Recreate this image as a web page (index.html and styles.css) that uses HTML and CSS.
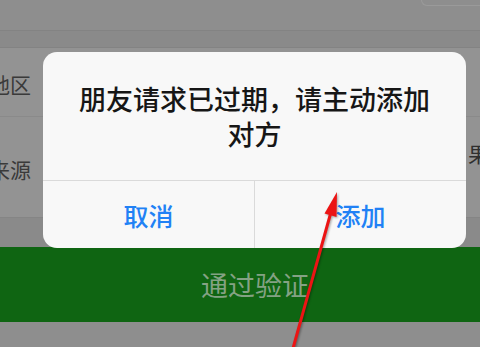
FILE: index.html
```html
<!DOCTYPE html>
<html lang="zh-CN">
<head>
  <meta charset="UTF-8">
  <meta name="viewport" content="width=device-width, initial-scale=1.0">
  <title>朋友验证</title>
  <link rel="stylesheet" href="styles.css">
</head>
<body>
  <div class="page">
    <div class="topbar">
      <div class="topbar-btn"></div>
    </div>
    <div class="band"></div>

    <!-- 资料列表 -->
    <div class="list">
      <div class="row row-region">
        <span class="label">地区</span>
      </div>
      <div class="row row-source">
        <span class="label">来源</span>
        <span class="value">果然</span>
      </div>
    </div>
    <div class="gap"></div>

    <div class="verify-btn">通过验证</div>
  </div>

  <!-- 弹窗 -->
  <div class="dialog">
    <div class="dialog-msg">
      <p>朋友请求已过期，请主动添加对方</p>
    </div>
    <div class="dialog-actions">
      <div class="action">取消</div>
      <div class="action">添加</div>
    </div>
  </div>

  <!-- 标注箭头 -->
  <svg class="arrow" width="480" height="347" viewBox="0 0 480 347">
    <line x1="292" y1="352" x2="331" y2="212" stroke="#ec1414" stroke-width="3" stroke-linecap="round"/>
    <polygon points="337,192 324.5,213.5 336.5,217" fill="#ec1414"/>
  </svg>
</body>
</html>
```

FILE: styles.css
```css
body {
  margin: 0;
  width: 480px;
  height: 347px;
  overflow: hidden;
  background: #8e8e8e;
  font-family: "Noto Sans CJK SC", "Noto Sans", sans-serif;
  position: relative;
}
.page {
  width: 480px;
}
.topbar {
  height: 30px;
  display: flex;
  justify-content: flex-end;
  align-items: flex-start;
  border-bottom: 1px solid #838383;
}
.topbar-btn {
  width: 58px;
  height: 5px;
  border: 1px solid #9a9a9a;
  border-top: none;
  border-right: none;
  border-radius: 0 0 0 6px;
}
.band {
  height: 16px;
  background: #8a8a8a;
  border-bottom: 1px solid #838383;
}
.list {
  background: #939393;
}
.row {
  display: flex;
  justify-content: space-between;
  align-items: center;
  font-size: 21px;
  color: #3a3a3a;
  border-bottom: 1px solid #8a8a8a;
}
.row-region {
  height: 68px;
}
.row-source {
  height: 100px;
  border-bottom-color: #858585;
}
.label {
  margin-left: -11px;
  padding-top: 4px;
}
.value {
  align-self: flex-start;
  padding-top: 21px;
  margin-right: -30px;
  white-space: nowrap;
  color: #2f2f2f;
}
.gap {
  height: 29px;
  background: #8a8a8a;
}
.verify-btn {
  height: 75px;
  background: #0f6512;
  color: #84a284;
  font-size: 27px;
  display: flex;
  align-items: center;
  justify-content: center;
  padding-left: 30px;
}

.dialog {
  position: absolute;
  left: 43px;
  top: 52px;
  width: 423px;
  height: 196px;
  background: #f8f8f8;
  border-radius: 14px;
  display: flex;
  flex-direction: column;
  overflow: hidden;
}
.dialog-msg {
  height: 128px;
  border-bottom: 1px solid #dadada;
  display: flex;
  align-items: center;
  justify-content: center;
  padding: 0 30px;
}
.dialog-msg p {
  margin: 0;
  font-size: 27px;
  font-weight: 500;
  line-height: 35px;
  color: #161616;
  text-align: center;
}
.dialog-actions {
  flex: 1;
  display: flex;
}
.action {
  flex: 1;
  display: flex;
  align-items: center;
  justify-content: center;
  font-size: 25px;
  font-weight: 500;
  color: #2181f5;
}
.action + .action {
  border-left: 1px solid #dadada;
}
.arrow {
  position: absolute;
  left: 0;
  top: 0;
  filter: drop-shadow(1px 1px 1px rgba(0, 0, 0, 0.35));
}
```
